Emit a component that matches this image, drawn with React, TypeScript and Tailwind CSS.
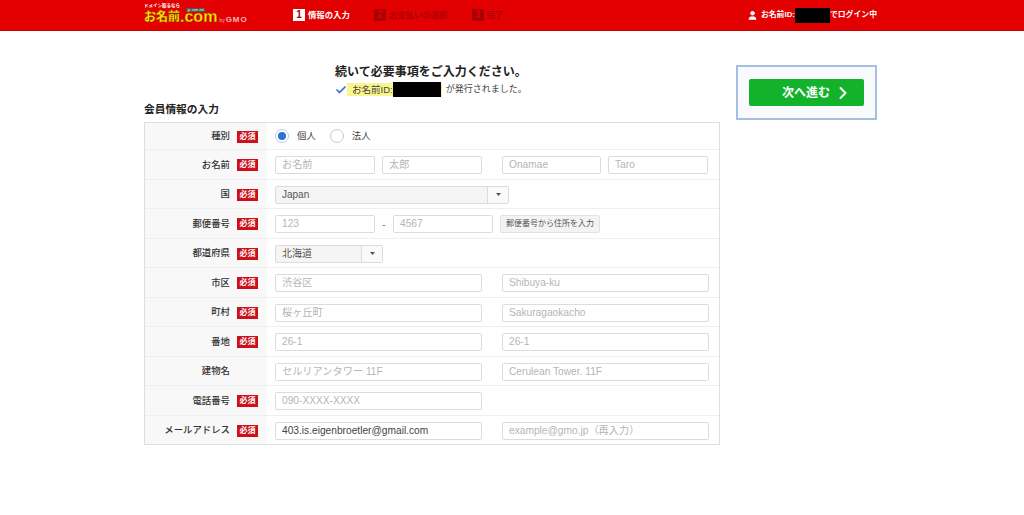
import { Check, ChevronRight, User } from 'lucide-react';
import type { ReactNode } from 'react';

const font = "font-['Liberation_Sans','Noto_Sans_CJK_JP',sans-serif]";

function Input({ className = 'w-[100px]', placeholder, value }: { className?: string; placeholder?: string; value?: string }) {
  return (
    <div className={`flex h-[18px] items-center rounded-[2px] border border-[#dcdcdc] bg-white px-[6px] text-[10.2px] ${value ? 'text-[#444]' : 'text-[#b5b5b5]'} ${className}`}>
      {value ?? placeholder}
    </div>
  );
}

function Select({ width, label }: { width: string; label: string }) {
  return (
    <div className={`flex h-[18px] items-center rounded-[2px] border border-[#dcdcdc] bg-[#f5f5f5] text-[10px] text-[#555] ${width}`}>
      <span className="flex-1 pl-[6px]">{label}</span>
      <span className="flex h-full w-[21px] items-center justify-center border-l border-[#dcdcdc] bg-[#fafafa]">
        <svg width="5" height="3" viewBox="0 0 5 3">
          <polygon points="0,0 5,0 2.5,3" fill="#555" />
        </svg>
      </span>
    </div>
  );
}

function Row({ label, required = true, height, children }: { label: string; required?: boolean; height: string; children: ReactNode }) {
  return (
    <div className={`flex border-b border-[#efefef] last:border-b-0 ${height}`}>
      <div className="flex w-[122px] shrink-0 items-center justify-end gap-[7px] bg-[#f8f8f8] pr-[9px] pt-[2px]">
        <span className={`text-[9.4px] font-medium text-[#333] ${required ? '' : 'mr-[28px]'}`}>{label}</span>
        {required && (
          <span className="flex h-[12px] w-[21px] items-center justify-center bg-[#cc101a] text-[8px] font-bold text-white">必須</span>
        )}
      </div>
      <div className="flex flex-1 items-center pl-[8px] pt-[2px]">{children}</div>
    </div>
  );
}

function Pair({ a, b }: { a: string; b: string }) {
  return (
    <div className="flex gap-[20px]">
      <Input className="w-[207px]" placeholder={a} />
      <Input className="w-[207px]" placeholder={b} />
    </div>
  );
}

function Step({ n, label, active }: { n: number; label: string; active?: boolean }) {
  return (
    <div className={`flex items-center gap-[3px] text-[8.4px] font-bold ${active ? 'text-white' : 'text-[#b00000]'}`}>
      <span className={`flex h-[12px] w-[12px] items-center justify-center text-[10px] font-bold ${active ? 'bg-white text-[#a80000]' : 'bg-[#a80000] text-[#e00000]'}`}>{n}</span>
      {label}
    </div>
  );
}

export default function App() {
  return (
    <div className={`h-[515px] w-[1024px] overflow-hidden bg-white ${font}`}>
      <header className="h-[31px] border-b border-[#c40000] bg-[#e30000]">
        <div className="ml-[144px] flex h-full w-[733px] items-center">
          <div className="flex w-[149px] shrink-0 flex-col pb-[4px] leading-none">
            <span className="h-[6px] text-[4.5px] font-bold leading-[6px] text-white">ドメイン取るなら</span>
            <div className="relative flex h-[15px] items-end">
              <span className="text-[12px] font-black leading-[14px] text-[#ffe600] [-webkit-text-stroke:0.3px_#5a3a00]">お名前</span>
              <span className="mb-[2px] text-[16px] font-black leading-[10px] text-[#ffe600] [-webkit-text-stroke:0.3px_#5a3a00]">.com</span>
              <span className="ml-[2px] text-[5px] leading-[8px] text-[#f3b8b8]">by</span>
              <span className="ml-[1px] text-[8px] font-bold leading-[8px] tracking-[1px] text-[#f3b8b8]">GMO</span>
              <span className="absolute left-[42px] top-[-1px] flex gap-[1px] bg-[#555] px-[1px] text-[3px] leading-[4px] text-white">
                <span>.jp</span>
                <span>.com</span>
                <span>.net</span>
              </span>
            </div>
          </div>
          <div className="flex items-center">
            <Step n={1} label="情報の入力" active />
            <ChevronRight size={24} strokeWidth={0.8} className="text-[#cc1010]" />
            <Step n={2} label="お支払いの選択" />
            <ChevronRight size={24} strokeWidth={0.8} className="text-[#cc1010]" />
            <Step n={3} label="完了" />
          </div>
          <div className="ml-auto flex items-center text-[7.85px] font-bold text-white">
            <User size={11} fill="white" className="mr-[3px]" />
            お名前ID:
            <span className="h-[15px] w-[35px] bg-black" />
            でログイン中
          </div>
        </div>
      </header>

      <main className="ml-[144px] flex w-[733px] items-start justify-between">
        <div className="w-[576px]">
          <div className="flex flex-col items-start pl-[191px] pt-[32px]">
            <p className="text-[12px] font-bold leading-[18px] text-[#222]">続いて必要事項をご入力ください。</p>
            <div className="mt-[2px] flex items-center text-[9px] text-[#444]">
              <Check size={12} strokeWidth={3.5} className="text-[#2f6fd8]" />
              <span className="flex h-[13px] items-center bg-[#fbf58e] pl-[5px] pr-[1px] text-[9.5px]">
                お名前ID:
                <span className="h-[15px] w-[48px] bg-black" />
              </span>
              <span className="ml-[4px]">が発行されました。</span>
            </div>
          </div>
          <h2 className="mt-[3px] h-[22px] text-[10.7px] font-bold leading-[18px] text-[#222]">会員情報の入力</h2>
          <div className="border border-[#dedede] text-[#333]">
            <Row label="種別" height="h-[27px]">
              <div className="flex items-center text-[9.4px] text-[#444]">
                <span className="flex h-[14px] w-[14px] items-center justify-center rounded-full border border-[#b5c8e8] bg-white">
                  <span className="h-[8px] w-[8px] rounded-full bg-[#2f6fd8]" />
                </span>
                <span className="ml-[8px]">個人</span>
                <span className="ml-[14px] h-[14px] w-[14px] rounded-full border border-[#c8c8c8] bg-white" />
                <span className="ml-[8px]">法人</span>
              </div>
            </Row>
            <Row label="お名前" height="h-[30px]">
              <div className="flex">
                <Input placeholder="お名前" />
                <Input className="ml-[7px] w-[100px]" placeholder="太郎" />
                <Input className="ml-[20px] w-[99px]" placeholder="Onamae" />
                <Input className="ml-[7px] w-[100px]" placeholder="Taro" />
              </div>
            </Row>
            <Row label="国" height="h-[29px]">
              <Select width="w-[234px]" label="Japan" />
            </Row>
            <Row label="郵便番号" height="h-[30px]">
              <div className="flex items-center">
                <Input placeholder="123" />
                <span className="w-[18px] text-center text-[10px] text-[#777]">-</span>
                <Input placeholder="4567" />
                <span className="ml-[7px] flex h-[18px] w-[100px] items-center justify-center rounded-[2px] border border-[#e2e2e2] bg-[#f3f3f3] text-[8px] text-[#555]">郵便番号から住所を入力</span>
              </div>
            </Row>
            <Row label="都道府県" height="h-[29px]">
              <Select width="w-[108px]" label="北海道" />
            </Row>
            <Row label="市区" height="h-[30px]">
              <Pair a="渋谷区" b="Shibuya-ku" />
            </Row>
            <Row label="町村" height="h-[29px]">
              <Pair a="桜ヶ丘町" b="Sakuragaokacho" />
            </Row>
            <Row label="番地" height="h-[30px]">
              <Pair a="26-1" b="26-1" />
            </Row>
            <Row label="建物名" required={false} height="h-[29px]">
              <Pair a="セルリアンタワー 11F" b="Cerulean Tower. 11F" />
            </Row>
            <Row label="電話番号" height="h-[30px]">
              <Input className="w-[207px]" placeholder="090-XXXX-XXXX" />
            </Row>
            <Row label="メールアドレス" height="h-[28px]">
              <div className="flex gap-[20px]">
                <Input className="w-[207px]" value="403.is.eigenbroetler@gmail.com" />
                <Input className="w-[207px]" placeholder="example@gmo.jp（再入力）" />
              </div>
            </Row>
          </div>
        </div>
        <div className="mt-[34px] flex h-[55px] w-[141px] items-center justify-center border-2 border-[#a6bfe0] bg-[#f8fafe]">
          <button className="flex h-[27px] w-[115px] items-center justify-center gap-[3px] rounded-[2px] bg-[#12b32a] pl-[22px] text-[12px] font-bold text-white">
            次へ進む
            <ChevronRight size={20} strokeWidth={2.4} />
          </button>
        </div>
      </main>
    </div>
  );
}
